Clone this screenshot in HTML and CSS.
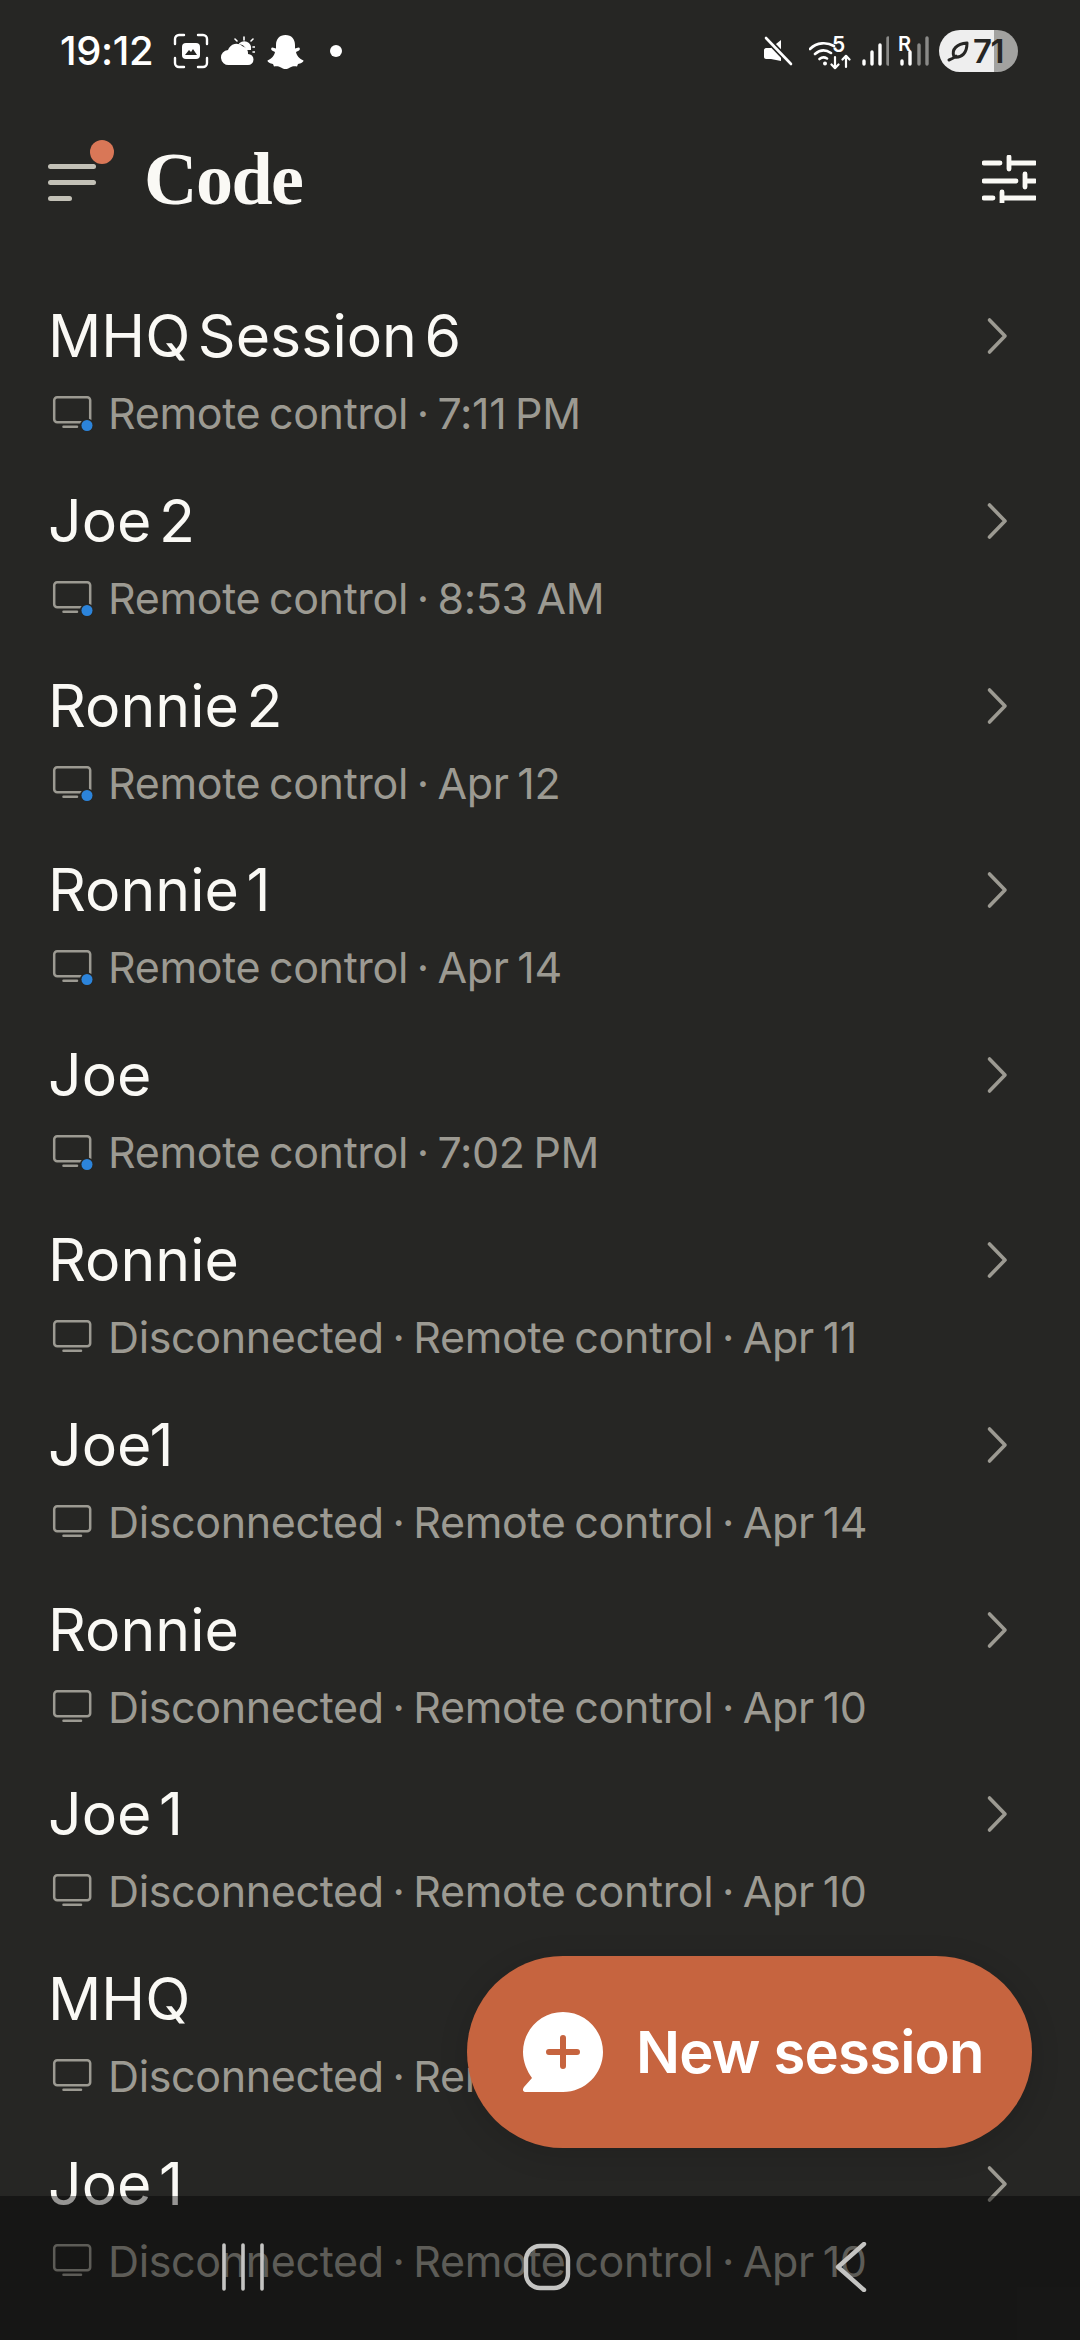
FILE: index.html
```html
<!DOCTYPE html>
<html lang="en">
<head>
<meta charset="utf-8">
<title>Code</title>
<link rel="stylesheet" href="styles.css">
</head>
<body>
<svg class="defs" width="0" height="0" aria-hidden="true">
  <symbol id="monitor" viewBox="0 0 44 36"><rect x="2.2" y="2.2" width="36" height="25" rx="3" fill="none" stroke="currentColor" stroke-width="2.5"/><path d="M11.5 31.7H29" stroke="currentColor" stroke-width="2.5" stroke-linecap="round"/></symbol>
  <symbol id="monitor-on" viewBox="0 0 44 36"><rect x="2.2" y="2.2" width="36" height="25" rx="3" fill="none" stroke="currentColor" stroke-width="2.5"/><path d="M11.5 31.7H25" stroke="currentColor" stroke-width="2.5" stroke-linecap="round"/><circle cx="35" cy="30.500" r="7" fill="#262624"/><circle cx="35" cy="30.500" r="5.500" fill="#2c84db"/></symbol>
  <symbol id="chev" viewBox="0 0 22 38"><path d="M3.5 3 19 19 3.5 35" fill="none" stroke="currentColor" stroke-width="3.6" stroke-linecap="round" stroke-linejoin="round"/></symbol>
</svg>
<main class="screen">
  <div class="status">
    <div class="status-left">
      <span class="time">19:12</span>
      <svg class="i-shot" width="36" height="36" viewBox="0 0 36 36"><path d="M2 11V6a4 4 0 0 1 4-4h5M25 2h5a4 4 0 0 1 4 4v5M34 25v5a4 4 0 0 1-4 4h-5M11 34H6a4 4 0 0 1-4-4v-5" fill="none" stroke="#fff" stroke-width="2.4" stroke-linecap="round"/><rect x="9" y="10" width="18" height="16" rx="4" fill="#fff"/><path d="M12 22l4-5 2 2 2-3 4 6z" fill="#262624"/></svg>
      <svg class="i-weather" width="34" height="30" viewBox="0 0 34 30"><path d="M8 29a7.500 7.500 0 0 1-1-15 9 9 0 0 1 15-3.500 7 7 0 0 1 5 7.500 5.500 5.500 0 0 1 0 11z" fill="#fff"/><path d="M17 9a7 7 0 0 1 13 5h-5a6 6 0 0 0-8-5z" fill="#fff"/><path d="M23 4V1M16 5l-2-2M30 5l2-2M32 11h2M32 16h2" stroke="#fff" stroke-width="1.600" stroke-linecap="round"/></svg>
      <svg class="i-snap" width="37" height="35" viewBox="0 0 37 35"><path d="M18.500 1C24.500 1 28 5 28 11V14.500L31.500 13.500C33 13.500 33.500 15.500 32 16.500L29 18C29.500 21.500 32.500 25 36.500 26.500 36.500 28.500 33.500 29.500 31 30L30 32.500C27 32 25 32.500 23 33.500 21 34.500 20 35 18.500 35 17 35 16 34.500 14 33.500 12 32.500 10 32 7 32.500L6 30C3.500 29.500.5 28.500.5 26.500 4.500 25 7.500 21.500 8 18L5 16.500C3.500 15.500 4 13.500 5.500 13.500L9 14.500V11C9 5 12.500 1 18.500 1Z" fill="#fff"/></svg>
      <span class="dot"></span>
    </div>
    <div class="status-right">
      <svg class="i-mute" width="30" height="30" viewBox="0 0 30 30"><path d="M1 11c0-1 1-2 2-2h5l10-8v21L8 20H3c-1 0-2-1-2-2z" fill="#fff" transform="translate(0 3)"/><path d="M3 2l25 26" stroke="#262624" stroke-width="6"/><path d="M3 2l25 26" stroke="#fff" stroke-width="2.600" stroke-linecap="round"/></svg>
      <svg class="i-wifi" width="42" height="32" viewBox="0 0 42 32"><path d="M1 10c7-7 17-7 24-3M6 15c5-4.500 11-4.500 16-1M10.500 20c2.500-2 5-2 7.500-.5" fill="none" stroke="#fff" stroke-width="2.600" stroke-linecap="round"/><circle cx="16" cy="24.500" r="2" fill="#fff"/><path d="M26 18v11M22.500 25.500l3.500 3.700 3.500-3.700M37 28V17M33.500 20.500L37 16.800l3.500 3.700" fill="none" stroke="#fff" stroke-width="2.200" stroke-linecap="round" stroke-linejoin="round"/></svg>
      <span class="wifi-5">5</span>
      <svg class="i-sig" width="28" height="30" viewBox="0 0 28 30"><path d="M3 28v-3M11 28V16M19 28V9" stroke="#fff" stroke-width="3.400" stroke-linecap="round"/><path d="M27 28V2" stroke="#8a8a88" stroke-width="3.400" stroke-linecap="round"/></svg>
      <svg class="i-sig2" width="30" height="30" viewBox="0 0 30 30"><path d="M3 28v-3M11 28V16" stroke="#fff" stroke-width="3.400" stroke-linecap="round"/><path d="M20 28V9M28 28V2" stroke="#8a8a88" stroke-width="3.400" stroke-linecap="round"/></svg>
      <span class="roam">R</span>
      <div class="battery">
        <svg width="22" height="30" viewBox="0 0 20 30" class="leaf"><path d="M1 24c3-1 5-2 7-4M6 21c-3-8 3-13 13-14 0 10-5 15-13 14z" fill="none" stroke="#262624" stroke-width="3" stroke-linecap="round" stroke-linejoin="round"/></svg>
        <span>71</span>
      </div>
    </div>
  </div>

  <header class="bar">
    <button class="menu" type="button" aria-label="Menu">
      <span class="line"></span><span class="line"></span><span class="line short"></span>
      <span class="badge"></span>
    </button>
    <h1 class="brand">Code</h1>
    <svg class="tune" width="54" height="48" viewBox="0 0 54 48"><path d="M2 8h16M27 8h26M27 2v12M2 26h32M43 26h10M43 19v13M2 43h9M20 43h33M20 37v12" fill="none" stroke="#faf9f5" stroke-width="4.800" stroke-linecap="round"/></svg>
  </header>

  <ul class="list">
    <li class="row"><div class="head"><span class="title">MHQ Session 6</span><svg class="chev"><use href="#chev"/></svg></div><div class="sub"><svg class="mon"><use href="#monitor-on"/></svg><span>Remote control · 7:11 PM</span></div></li>
    <li class="row"><div class="head"><span class="title">Joe 2</span><svg class="chev"><use href="#chev"/></svg></div><div class="sub"><svg class="mon"><use href="#monitor-on"/></svg><span>Remote control · 8:53 AM</span></div></li>
    <li class="row"><div class="head"><span class="title">Ronnie 2</span><svg class="chev"><use href="#chev"/></svg></div><div class="sub"><svg class="mon"><use href="#monitor-on"/></svg><span>Remote control · Apr 12</span></div></li>
    <li class="row"><div class="head"><span class="title">Ronnie 1</span><svg class="chev"><use href="#chev"/></svg></div><div class="sub"><svg class="mon"><use href="#monitor-on"/></svg><span>Remote control · Apr 14</span></div></li>
    <li class="row"><div class="head"><span class="title">Joe</span><svg class="chev"><use href="#chev"/></svg></div><div class="sub"><svg class="mon"><use href="#monitor-on"/></svg><span>Remote control · 7:02 PM</span></div></li>
    <li class="row"><div class="head"><span class="title">Ronnie</span><svg class="chev"><use href="#chev"/></svg></div><div class="sub"><svg class="mon"><use href="#monitor"/></svg><span>Disconnected · Remote control · Apr 11</span></div></li>
    <li class="row"><div class="head"><span class="title">Joe1</span><svg class="chev"><use href="#chev"/></svg></div><div class="sub"><svg class="mon"><use href="#monitor"/></svg><span>Disconnected · Remote control · Apr 14</span></div></li>
    <li class="row"><div class="head"><span class="title">Ronnie</span><svg class="chev"><use href="#chev"/></svg></div><div class="sub"><svg class="mon"><use href="#monitor"/></svg><span>Disconnected · Remote control · Apr 10</span></div></li>
    <li class="row"><div class="head"><span class="title">Joe 1</span><svg class="chev"><use href="#chev"/></svg></div><div class="sub"><svg class="mon"><use href="#monitor"/></svg><span>Disconnected · Remote control · Apr 10</span></div></li>
    <li class="row"><div class="head"><span class="title">MHQ</span><svg class="chev"><use href="#chev"/></svg></div><div class="sub"><svg class="mon"><use href="#monitor"/></svg><span>Disconnected · Remote control · Apr 10</span></div></li>
    <li class="row"><div class="head"><span class="title">Joe 1</span><svg class="chev"><use href="#chev"/></svg></div><div class="sub"><svg class="mon"><use href="#monitor"/></svg><span>Disconnected · Remote control · Apr 10</span></div></li>
  </ul>

  <button class="fab" type="button">
    <svg width="80" height="80" viewBox="0 0 80 80"><path d="M40 0c22 0 40 18 40 40S62 80 40 80H3c-3 0-4-2-2-5l8-9C4 59 0 50 0 40 0 18 18 0 40 0z" fill="#fff"/><path d="M40 26v28M26 40h28" stroke="#c6643f" stroke-width="6" stroke-linecap="round"/></svg>
    <span>New session</span>
  </button>

  <nav class="nav">
    <svg width="44" height="48" viewBox="0 0 44 48"><path d="M3 2v44M22 2v44M41 2v44" stroke="#c4c4c2" stroke-width="3.600" stroke-linecap="round"/></svg>
    <svg width="48" height="48" viewBox="0 0 48 48"><rect x="3" y="3" width="42" height="42" rx="14" fill="none" stroke="#c4c4c2" stroke-width="4.400"/></svg>
    <svg width="32" height="50" viewBox="0 0 32 50"><path d="M29 2 3 25l26 23" fill="none" stroke="#c4c4c2" stroke-width="4.400" stroke-linecap="round" stroke-linejoin="round"/></svg>
  </nav>
</main>
</body>
</html>
```
FILE: styles.css
```css
* { box-sizing: border-box; }
html, body { margin: 0; padding: 0; background: #262624; }
.defs { position: absolute; }
.screen {
  position: relative;
  width: 1080px;
  height: 2340px;
  overflow: hidden;
  background: #262624;
  font-family: Inter, "Liberation Sans", sans-serif;
  color: #faf9f5;
}

/* status bar */
.status {
  height: 100px;
  padding: 29px 61px 0 60px;
  display: flex;
  justify-content: space-between;
  align-items: flex-start;
}
.status-left { display: flex; align-items: center; height: 44px; }
.time { font-size: 40px; font-weight: 500; color: #fff; letter-spacing: -.4px; width: 93px; line-height: 44px; white-space: nowrap; }
.i-shot { margin-left: 20px; }
.i-weather { margin-left: 12px; }
.i-snap { margin-left: 12px; }
.dot { width: 12px; height: 12px; border-radius: 50%; background: #fff; margin-left: 26px; }
.status-right { position: relative; display: flex; align-items: center; height: 44px; width: 256px; }
.i-mute { margin-right: 16px; }
.i-wifi { margin-right: 10px; margin-top: 8px; }
.wifi-5 { position: absolute; left: 69px; top: 4px; font-size: 21px; font-weight: 600; color: #fff; line-height: 24px; }
.i-sig { margin-right: 10px; }
.i-sig2 { margin-right: 10px; }
.roam { position: absolute; left: 135px; top: 3px; font-size: 20px; font-weight: 600; color: #fff; line-height: 24px; }
.battery {
  width: 79px;
  height: 42px;
  border-radius: 21px;
  background: linear-gradient(90deg, #eeeeee 55px, #a2a2a0 55px);
  display: flex;
  align-items: center;
  padding-left: 8px;
  gap: 4px;
  font-size: 33px;
  font-weight: 600;
  color: #262624;
  letter-spacing: -1.500px;
}
.leaf { flex: none; }

/* header */
.bar {
  height: 158px;
  display: flex;
  align-items: center;
  padding: 0 44px 0 48px;
}
.menu {
  position: relative;
  width: 48px;
  height: 37px;
  padding: 0;
  margin: 6px 0 0;
  border: 0;
  background: none;
  display: flex;
  flex-direction: column;
  gap: 11px;
}
.line { display: block; width: 48px; height: 5px; border-radius: 3px; background: #c2c0b6; }
.line.short { width: 24px; }
.badge { position: absolute; left: 42px; top: -24px; width: 24px; height: 24px; border-radius: 50%; background: #d97757; }
.brand {
  margin: 0 0 0 48px;
  flex: 1;
  font-family: "Liberation Serif", serif;
  font-weight: 700;
  font-size: 74px;
  line-height: 80px;
  letter-spacing: -1.500px;
  color: #faf9f5;
}

/* list */
.list { list-style: none; margin: 42px 0 0; padding: 0; }
.row { height: 184.8px; padding: 0 72px 0 48px; }
.head { display: flex; justify-content: space-between; align-items: center; height: 72px; }
.title { font-size: 59px; line-height: 72px; letter-spacing: 0; word-spacing: -9px; color: #faf9f5; }
.chev { width: 22px; height: 38px; color: #9c9a92; flex: none; }
.sub { display: flex; align-items: center; height: 48px; margin-top: 17px; font-size: 43px; line-height: 48px; color: #9c9a92; letter-spacing: -.350px; word-spacing: -3px; }
.mon { width: 44px; height: 36px; margin: 0 12px 0 4px; flex: none; color: #9c9a92; }

/* floating button */
.fab {
  position: absolute;
  left: 467px;
  top: 1956px;
  width: 565px;
  height: 192px;
  border: 0;
  border-radius: 96px;
  background: #c6643f;
  color: #fff;
  display: flex;
  align-items: center;
  padding: 0 0 0 56px;
  gap: 33px;
  font-family: inherit;
  font-size: 58px;
  font-weight: 600;
  letter-spacing: -.800px;
  box-shadow: 0 6px 30px rgba(0, 0, 0, .14);
}

/* system nav */
.nav {
  position: absolute;
  left: 0;
  right: 0;
  bottom: 0;
  height: 144px;
  background: rgba(0, 0, 0, .4);
  display: grid;
  grid-template-columns: repeat(3, 304px);
  justify-items: center;
  align-items: center;
  padding: 0 0 2px 91px;
}
```
